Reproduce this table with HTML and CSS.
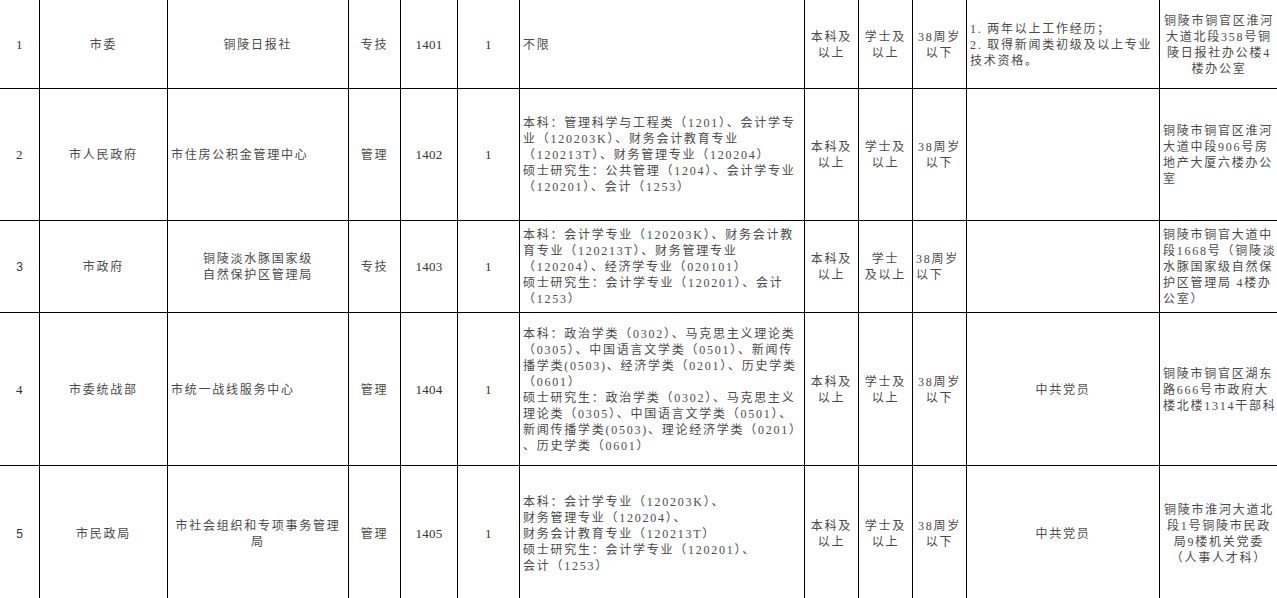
FILE: index.html
```html
<!DOCTYPE html>
<html lang="zh-CN">
<head>
<meta charset="utf-8">
<title>岗位表</title>
<link rel="stylesheet" href="styles.css">
</head>
<body>
<div class="sheet">
  <!-- row 1 -->
  <div class="c ctr num">1</div>
  <div class="c ctr">市委</div>
  <div class="c ctr">铜陵日报社</div>
  <div class="c ctr">专技</div>
  <div class="c ctr num">1401</div>
  <div class="c ctr num">1</div>
  <div class="c left">不限</div>
  <div class="c ctr">本科及<br>以上</div>
  <div class="c ctr">学士及<br>以上</div>
  <div class="c ctr">38周岁<br>以下</div>
  <div class="c left">1. 两年以上工作经历；<br>2. 取得新闻类初级及以上专业<br>技术资格。</div>
  <div class="c ctr last">铜陵市铜官区淮河<br>大道北段358号铜<br>陵日报社办公楼4<br>楼办公室</div>

  <!-- row 2 -->
  <div class="c ctr num">2</div>
  <div class="c ctr">市人民政府</div>
  <div class="c left">市住房公积金管理中心</div>
  <div class="c ctr">管理</div>
  <div class="c ctr num">1402</div>
  <div class="c ctr num">1</div>
  <div class="c left">本科：管理科学与工程类（1201）、会计学专<br>业（120203K）、财务会计教育专业<br>（120213T）、财务管理专业（120204）<br>硕士研究生：公共管理（1204）、会计学专业<br>（120201）、会计（1253）</div>
  <div class="c ctr">本科及<br>以上</div>
  <div class="c ctr">学士及<br>以上</div>
  <div class="c ctr">38周岁<br>以下</div>
  <div class="c left"></div>
  <div class="c left last">铜陵市铜官区淮河<br>大道中段906号房<br>地产大厦六楼办公<br>室</div>

  <!-- row 3 -->
  <div class="c ctr sans">3</div>
  <div class="c ctr">市政府</div>
  <div class="c ctr">铜陵淡水豚国家级<br>自然保护区管理局</div>
  <div class="c ctr">专技</div>
  <div class="c ctr num">1403</div>
  <div class="c ctr num">1</div>
  <div class="c left">本科：会计学专业（120203K）、财务会计教<br>育专业（120213T）、财务管理专业<br>（120204）、经济学专业（020101）<br>硕士研究生：会计学专业（120201）、会计<br>（1253）</div>
  <div class="c ctr">本科及<br>以上</div>
  <div class="c ctr">学士<br>及以上</div>
  <div class="c left">38周岁<br>以下</div>
  <div class="c left"></div>
  <div class="c left last">铜陵市铜官大道中<br>段1668号（铜陵淡<br>水豚国家级自然保<br>护区管理局 4楼办<br>公室）</div>

  <!-- row 4 -->
  <div class="c ctr num">4</div>
  <div class="c ctr">市委统战部</div>
  <div class="c left">市统一战线服务中心</div>
  <div class="c ctr">管理</div>
  <div class="c ctr num">1404</div>
  <div class="c ctr num">1</div>
  <div class="c left">本科：政治学类（0302）、马克思主义理论类<br>（0305）、中国语言文学类（0501）、新闻传<br>播学类(0503)、经济学类（0201）、历史学类<br>（0601）<br>硕士研究生：政治学类（0302）、马克思主义<br>理论类（0305）、中国语言文学类（0501）、<br>新闻传播学类(0503)、理论经济学类（0201）<br>、历史学类（0601）</div>
  <div class="c ctr">本科及<br>以上</div>
  <div class="c ctr">学士及<br>以上</div>
  <div class="c ctr">38周岁<br>以下</div>
  <div class="c ctr">中共党员</div>
  <div class="c left last">铜陵市铜官区湖东<br>路666号市政府大<br>楼北楼1314干部科</div>

  <!-- row 5 -->
  <div class="c ctr sans">5</div>
  <div class="c ctr">市民政局</div>
  <div class="c ctr">市社会组织和专项事务管理<br>局</div>
  <div class="c ctr">管理</div>
  <div class="c ctr num">1405</div>
  <div class="c ctr num">1</div>
  <div class="c left">本科：会计学专业（120203K）、<br>财务管理专业（120204）、<br>财务会计教育专业（120213T）<br>硕士研究生：会计学专业（120201）、<br>会计（1253）</div>
  <div class="c ctr">本科及<br>以上</div>
  <div class="c ctr">学士及<br>以上</div>
  <div class="c ctr">38周岁<br>以下</div>
  <div class="c ctr">中共党员</div>
  <div class="c ctr last">铜陵市淮河大道北<br>段1号铜陵市民政<br>局9楼机关党委<br>（人事人才科）</div>
</div>
</body>
</html>
```
FILE: styles.css
```css
html, body {
  margin: 0;
  padding: 0;
  background: #ffffff;
  overflow: hidden;
}

.sheet {
  display: grid;
  grid-template-columns: 40px 128px 181px 52px 57px 62px 285px 54px 54px 54px 193px 118px;
  grid-template-rows: 89px 132px 92px 153px 136px;
  width: 1278px;
  font-family: "Liberation Serif", "Noto Sans CJK SC", serif;
  font-size: 12px;
  line-height: 16px;
  letter-spacing: 1.75px;
  color: #4a4a4a;
}

.c {
  box-sizing: border-box;
  border-right: 1px solid #000;
  border-bottom: 1px solid #000;
  display: flex;
  flex-direction: column;
  justify-content: center;
  padding: 1px 3px 0;
  white-space: nowrap;
  overflow: hidden;
}

.c.last {
  border-right: none;
}

.ctr {
  text-align: center;
  align-items: center;
}

.left {
  text-align: left;
  align-items: flex-start;
}

.num {
  letter-spacing: 0.3px;
  font-size: 13px;
  color: #333;
}

.sans {
  font-family: "Liberation Sans", sans-serif;
  font-size: 12px;
  letter-spacing: 0;
  color: #333;
}
```
